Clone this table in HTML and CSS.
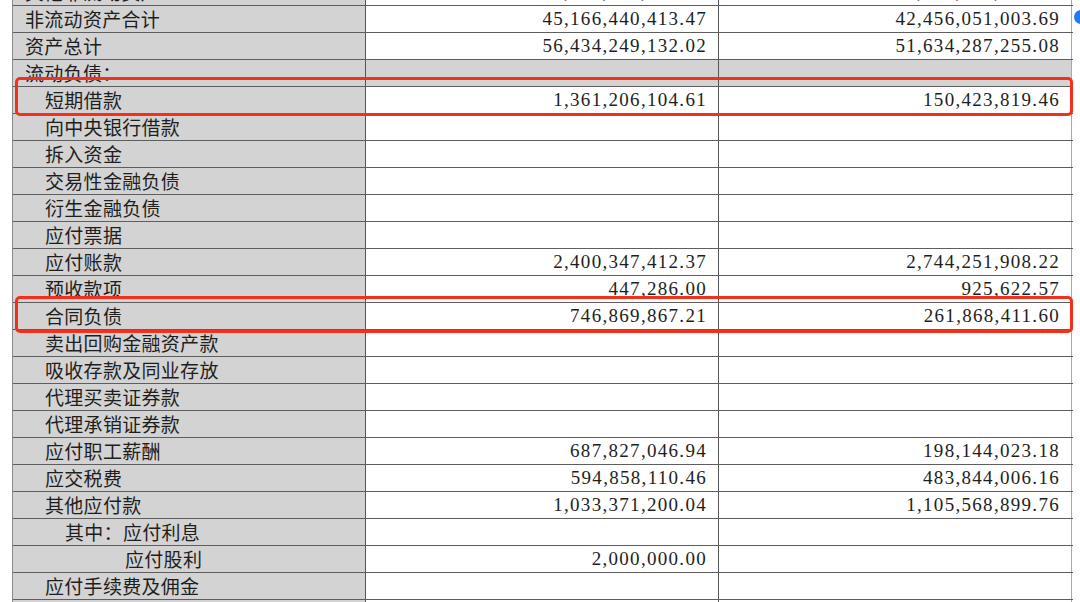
FILE: index.html
```html
<!DOCTYPE html>
<html lang="zh">
<head>
<meta charset="utf-8">
<link rel="stylesheet" href="styles.css">
</head>
<body>
<div class="page">
  <div class="sheet">
    <div class="row"><div class="c name">其他非流动资产</div><div class="c num">1,234,567,890.12</div><div class="c num">1,098,765,432.10</div></div>
    <div class="row"><div class="c name">非流动资产合计</div><div class="c num">45,166,440,413.47</div><div class="c num">42,456,051,003.69</div></div>
    <div class="row"><div class="c name">资产总计</div><div class="c num">56,434,249,132.02</div><div class="c num">51,634,287,255.08</div></div>
    <div class="row section"><div class="c name">流动负债：</div><div class="c num"></div><div class="c num"></div></div>
    <div class="row"><div class="c name i1">短期借款</div><div class="c num">1,361,206,104.61</div><div class="c num">150,423,819.46</div></div>
    <div class="row"><div class="c name i1">向中央银行借款</div><div class="c num"></div><div class="c num"></div></div>
    <div class="row"><div class="c name i1">拆入资金</div><div class="c num"></div><div class="c num"></div></div>
    <div class="row"><div class="c name i1">交易性金融负债</div><div class="c num"></div><div class="c num"></div></div>
    <div class="row"><div class="c name i1">衍生金融负债</div><div class="c num"></div><div class="c num"></div></div>
    <div class="row"><div class="c name i1">应付票据</div><div class="c num"></div><div class="c num"></div></div>
    <div class="row"><div class="c name i1">应付账款</div><div class="c num">2,400,347,412.37</div><div class="c num">2,744,251,908.22</div></div>
    <div class="row"><div class="c name i1">预收款项</div><div class="c num">447,286.00</div><div class="c num">925,622.57</div></div>
    <div class="row"><div class="c name i1">合同负债</div><div class="c num">746,869,867.21</div><div class="c num">261,868,411.60</div></div>
    <div class="row"><div class="c name i1">卖出回购金融资产款</div><div class="c num"></div><div class="c num"></div></div>
    <div class="row"><div class="c name i1">吸收存款及同业存放</div><div class="c num"></div><div class="c num"></div></div>
    <div class="row"><div class="c name i1">代理买卖证券款</div><div class="c num"></div><div class="c num"></div></div>
    <div class="row"><div class="c name i1">代理承销证券款</div><div class="c num"></div><div class="c num"></div></div>
    <div class="row"><div class="c name i1">应付职工薪酬</div><div class="c num">687,827,046.94</div><div class="c num">198,144,023.18</div></div>
    <div class="row"><div class="c name i1">应交税费</div><div class="c num">594,858,110.46</div><div class="c num">483,844,006.16</div></div>
    <div class="row"><div class="c name i1">其他应付款</div><div class="c num">1,033,371,200.04</div><div class="c num">1,105,568,899.76</div></div>
    <div class="row"><div class="c name i2">其中：应付利息</div><div class="c num"></div><div class="c num"></div></div>
    <div class="row"><div class="c name i3">应付股利</div><div class="c num">2,000,000.00</div><div class="c num"></div></div>
    <div class="row"><div class="c name i1">应付手续费及佣金</div><div class="c num"></div><div class="c num"></div></div>
    <div class="row"><div class="c name i1">应付分保账款</div><div class="c num"></div><div class="c num"></div></div>
  </div>
  <div class="mark mark-a"></div>
  <div class="mark mark-b"></div>
  <div class="dot"></div>
</div>
</body>
</html>
```

FILE: styles.css
```css
html, body {
  margin: 0;
  padding: 0;
  background: #ffffff;
  overflow: hidden;
}

.page {
  position: relative;
  width: 1080px;
  height: 602px;
  overflow: hidden;
}

.sheet {
  margin-top: -22px;
  margin-left: 12px;
  width: 1060px;
  border-left: 1px solid #8a8a8a;
  font-family: "Noto Sans CJK SC", "Noto Sans", sans-serif;
  color: #1e1e1e;
}

.row {
  display: grid;
  grid-template-columns: 353px 353px 353px;
  height: 27px;
  box-sizing: border-box;
  border-top: 1px solid #5e5e5e;
}

.c {
  box-sizing: border-box;
  height: 26px;
  line-height: 25px;
  border-right: 1px solid #555555;
  white-space: nowrap;
  overflow: hidden;
}

.c:last-child {
  border-right-color: #a8a8a8;
}

.name {
  background: #d3d3d3;
  font-size: 19px;
  letter-spacing: 0.3px;
  padding-left: 12px;
}

.name.i1 { padding-left: 32px; }
.name.i2 { padding-left: 52px; }
.name.i3 { padding-left: 112px; }

.num {
  background: #ffffff;
  text-align: right;
  padding-right: 11px;
  font-family: "Liberation Serif", "DejaVu Serif", serif;
  font-size: 19px;
  letter-spacing: 1.3px;
}

.section .c {
  background: #d3d3d3;
}

.mark {
  position: absolute;
  border: 3.5px solid #f2301c;
  border-radius: 5px;
  box-sizing: border-box;
}

.mark-a {
  left: 15px;
  top: 77px;
  width: 1058px;
  height: 39px;
}

.mark-b {
  left: 15px;
  top: 296px;
  width: 1058px;
  height: 37px;
}

.dot {
  position: absolute;
  left: 1074px;
  top: 10px;
  width: 14px;
  height: 14px;
  border-radius: 50%;
  background: #1f7cf2;
}
```
